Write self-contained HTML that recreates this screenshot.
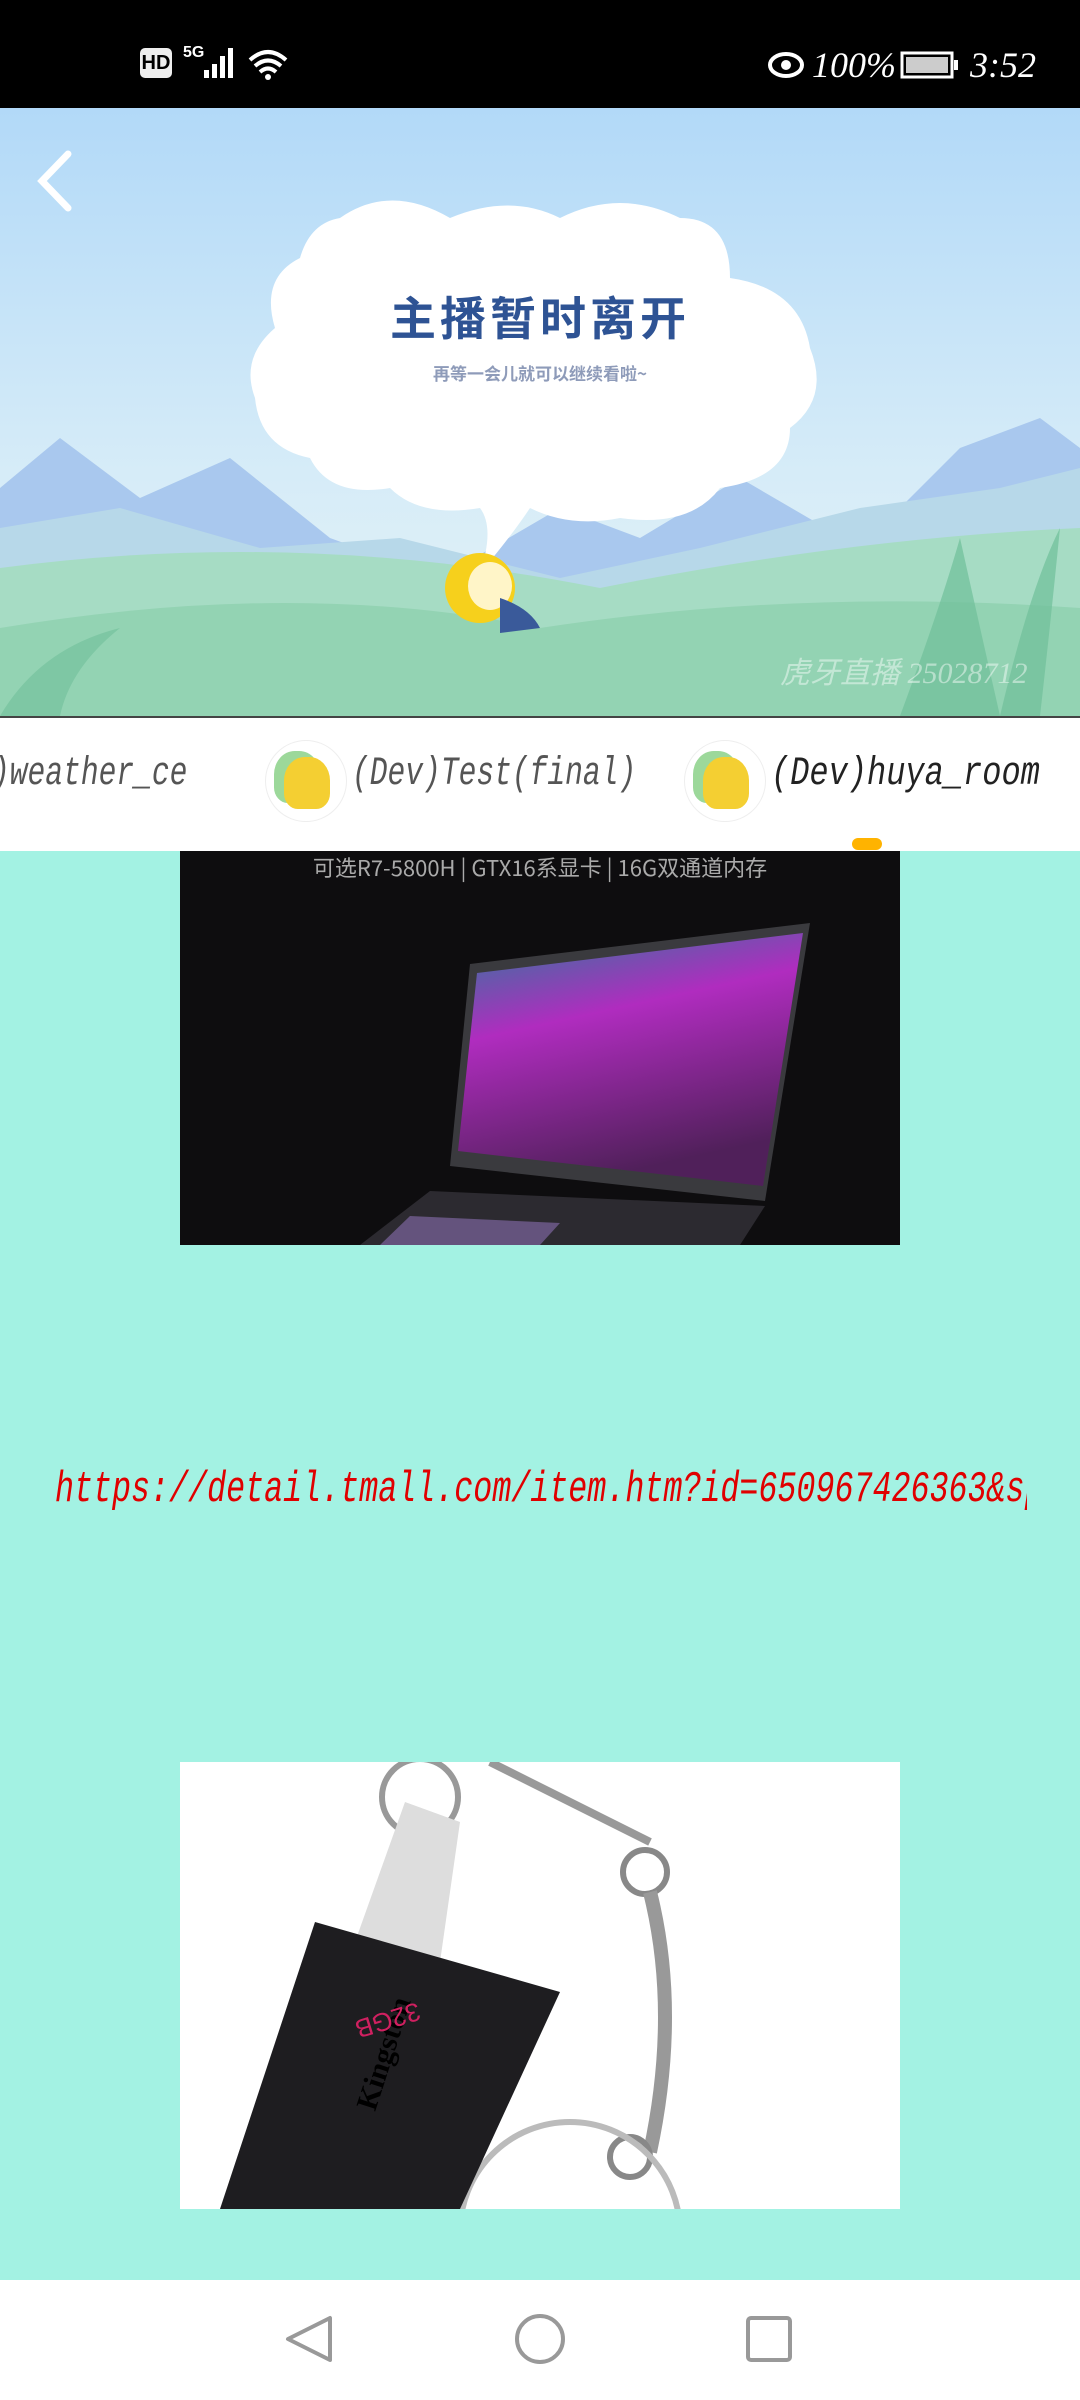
<!DOCTYPE html>
<html><head><meta charset="utf-8"><style>
*{margin:0;padding:0;box-sizing:border-box}
body{width:1080px;height:2400px;overflow:hidden;background:#a3f2e3;font-family:"Liberation Sans","Noto Sans CJK SC",sans-serif;position:relative}
.abs{position:absolute}
.tab{position:absolute;top:752px;font:italic 40px 'Liberation Mono',serif;transform:scaleX(0.74);transform-origin:left;white-space:nowrap}
</style></head><body>
<!-- status bar -->
<div class="abs" style="left:0;top:0;width:1080px;height:108px;background:#000"></div>
<div class="abs" style="left:140px;top:48px;width:32px;height:30px;background:#eee;border-radius:5px;color:#000;font:bold 20px 'Liberation Sans';text-align:center;line-height:30px">HD</div>
<div class="abs" style="left:183px;top:44px;color:#fff;font:bold 16px 'Liberation Sans'">5G</div>
<svg class="abs" style="left:180px;top:44px" width="110" height="40"><rect x="24" y="26" width="5" height="8" fill="#fff"/><rect x="32" y="20" width="5" height="14" fill="#fff"/><rect x="40" y="12" width="5" height="22" fill="#fff"/><rect x="48" y="4" width="5" height="30" fill="#fff"/>
<path d="M70 16 Q88 0 106 16 M75 22 Q88 11 101 22 M80 28 Q88 21 96 28" stroke="#fff" stroke-width="4" fill="none"/><circle cx="88" cy="33" r="3" fill="#fff"/></svg>
<svg class="abs" style="left:768px;top:50px" width="40" height="30"><ellipse cx="18" cy="15" rx="16" ry="11" fill="none" stroke="#fff" stroke-width="4"/><circle cx="18" cy="15" r="5" fill="#fff"/></svg>
<div class="abs" style="left:812px;top:44px;color:#fff;font:italic 36px 'Liberation Serif'">100%</div>
<svg class="abs" style="left:900px;top:50px" width="62" height="30"><rect x="2" y="3" width="50" height="24" fill="none" stroke="#fff" stroke-width="3"/><rect x="6" y="7" width="42" height="16" fill="#ccc"/><rect x="54" y="10" width="4" height="10" fill="#fff"/></svg>
<div class="abs" style="left:970px;top:44px;color:#fff;font:italic 36px 'Liberation Serif'">3:52</div>

<!-- banner -->
<div class="abs" style="left:0;top:108px;width:1080px;height:608px;overflow:hidden;background:linear-gradient(#b2d9f8,#d6ecf8 60%,#e6f3f4)">
<svg width="1080" height="608" style="position:absolute;left:0;top:0">
<path d="M0 380 L60 330 L140 390 L230 350 L330 430 L440 470 L560 400 L640 430 L740 370 L860 440 L960 340 L1040 310 L1080 340 L1080 608 L0 608Z" fill="#a9c8ee"/>
<path d="M0 420 L120 400 L260 440 L400 430 L560 470 L700 440 L860 400 L1000 380 L1080 360 L1080 608 L0 608Z" fill="#b7d8e9"/>
<path d="M0 460 Q300 420 600 480 Q850 430 1080 420 L1080 608 L0 608Z" fill="#a6dcc4"/>
<path d="M0 520 Q300 470 540 520 Q800 480 1080 500 L1080 608 L0 608Z" fill="#93d3b3"/>
<path d="M900 608 Q940 500 960 430 Q980 520 1000 608Z M1000 608 Q1030 480 1060 420 Q1050 520 1040 608Z" fill="#6fbf9a" opacity="0.7"/>
<path d="M0 608 Q40 540 120 520 Q70 560 60 608Z" fill="#6fbf9a" opacity="0.6"/>
<path d="M340 110 Q390 75 450 110 Q510 85 560 110 Q620 80 680 110 Q730 110 730 170 Q800 180 810 240 Q830 290 790 320 Q790 370 720 380 Q690 420 620 410 Q570 420 530 400 Q510 430 480 465 Q495 420 480 400 Q420 410 390 380 Q330 390 310 350 Q260 340 255 290 Q240 250 275 220 Q260 170 300 150 Q310 115 340 110Z" fill="#fff"/>
<ellipse cx="480" cy="480" rx="35" ry="35" fill="#f6d01c"/>
<ellipse cx="490" cy="478" rx="22" ry="24" fill="#fff5c8"/>
<path d="M500 490 Q530 500 540 520 L500 525Z" fill="#3a5a9a"/>
</svg>
<div class="abs" style="left:0;top:175px;width:1080px;text-align:center;color:#2e5394;font:bold 46px 'Noto Sans CJK SC',sans-serif;letter-spacing:4px">主播暂时离开</div>
<div class="abs" style="left:0;top:252px;width:1080px;text-align:center;color:#8e9bb9;font:bold 17px 'Noto Sans CJK SC',sans-serif">再等一会儿就可以继续看啦~</div>
<div class="abs" style="left:780px;top:540px;color:rgba(255,255,255,0.45);font:italic 30px 'Liberation Serif','Noto Sans CJK SC',serif">虎牙直播 25028712</div>
<svg class="abs" style="left:30px;top:38px" width="50" height="70"><path d="M38 8 L12 35 L38 62" stroke="#fff" stroke-width="7" fill="none" stroke-linecap="round"/></svg>
</div>

<!-- tabs -->
<div class="abs" style="left:0;top:716px;width:1080px;height:135px;background:#fff;border-top:2px solid #444"></div>
<div class="tab" style="left:-8px;color:#555">)weather_ce</div>
<div class="abs" style="left:265px;top:740px;width:82px;height:82px;border-radius:50%;background:#fff;border:1px solid #eee;overflow:hidden"><div style="margin:16px 18px;width:46px;height:52px;border-radius:45% 45% 30% 30%;background:#f4cf32;box-shadow:-10px -6px 0 #9cd89a"></div></div>
<div class="tab" style="left:352px;color:#555">(Dev)Test(final)</div>
<div class="abs" style="left:684px;top:740px;width:82px;height:82px;border-radius:50%;background:#fff;border:1px solid #eee;overflow:hidden"><div style="margin:16px 18px;width:46px;height:52px;border-radius:45% 45% 30% 30%;background:#f4cf32;box-shadow:-10px -6px 0 #9cd89a"></div></div>
<div class="tab" style="left:771px;color:#222;transform:scaleX(0.8)">(Dev)huya_room</div>
<div class="abs" style="left:852px;top:838px;width:30px;height:12px;border-radius:6px;background:#ffb300"></div>

<!-- laptop image -->
<div class="abs" style="left:180px;top:851px;width:720px;height:394px;background:#0e0d0f;overflow:hidden">
<div class="abs" style="left:0;top:0;width:720px;text-align:center;color:#aaa;font:22px 'Noto Sans CJK SC',sans-serif">可选R7-5800H | GTX16系显卡 | 16G双通道内存</div>
<svg width="720" height="394" style="position:absolute;left:0;top:0">
<defs><linearGradient id="sc" x1="0" y1="0" x2="0.3" y2="1"><stop offset="0" stop-color="#2a7c9c"/><stop offset="0.4" stop-color="#b02cbf"/><stop offset="1" stop-color="#50205a"/></linearGradient></defs>
<polygon points="290,113 630,72 585,350 270,315" fill="#3a3a3e"/>
<polygon points="297,122 623,82 583,335 278,300" fill="url(#sc)"/>
<polygon points="250,340 585,355 560,394 180,394" fill="#2c2a30"/>
<polygon points="230,365 380,372 360,394 200,394" fill="#8a6fb0" opacity="0.6"/>
</svg></div>

<!-- url -->
<div class="abs" style="left:55px;top:1465px;width:972px;height:60px;overflow:hidden">
<div style="white-space:nowrap;color:#e00000;font:italic 44px 'Liberation Mono',serif;transform:scaleX(0.72);transform-origin:left;width:1400px">https://detail.tmall.com/item.htm?id=650967426363&amp;spm</div></div>

<!-- usb image -->
<div class="abs" style="left:180px;top:1762px;width:720px;height:447px;background:#fff;overflow:hidden">
<svg width="720" height="447">
<circle cx="240" cy="35" r="38" fill="none" stroke="#999" stroke-width="6"/>
<path d="M310 0 L470 80" stroke="#999" stroke-width="8"/>
<circle cx="465" cy="110" r="22" fill="none" stroke="#888" stroke-width="6"/>
<path d="M470 130 Q500 250 470 390" stroke="#999" stroke-width="14" fill="none"/>
<circle cx="450" cy="395" r="20" fill="none" stroke="#888" stroke-width="6"/>
<circle cx="390" cy="470" r="110" fill="none" stroke="#bbb" stroke-width="6"/>
<polygon points="225,40 280,60 260,200 175,180" fill="#ddd"/>
<polygon points="135,160 380,230 280,447 40,447" fill="#1e1d20"/>
<text x="0" y="0" transform="translate(195,350) rotate(-72)" font-family="Liberation Serif" font-weight="bold" font-size="30" fill="#000">Kingston</text>
<text x="0" y="0" transform="translate(237,240) rotate(163)" font-family="Liberation Sans" font-size="26" fill="#d02060">32GB</text>
</svg></div>

<!-- nav bar -->
<div class="abs" style="left:0;top:2280px;width:1080px;height:120px;background:#fff"></div>
<svg class="abs" style="left:0;top:2280px" width="1080" height="120">
<path d="M330 38 L330 80 L288 59Z" fill="none" stroke="#999" stroke-width="4" stroke-linejoin="round"/>
<circle cx="540" cy="59" r="23" fill="none" stroke="#999" stroke-width="4"/>
<rect x="748" y="38" width="42" height="42" rx="3" fill="none" stroke="#999" stroke-width="4"/>
</svg>
</body></html>
